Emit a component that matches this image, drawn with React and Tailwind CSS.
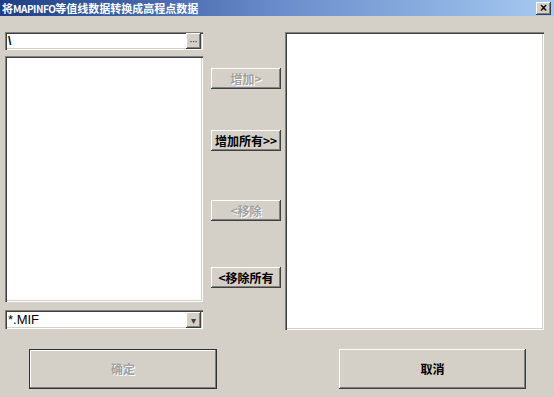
import React from "react";

const cjk = { fontFamily: '"SimSun", "Noto Sans CJK SC", sans-serif' };

// classic win2k bevels
const sunken =
  "shadow-[inset_1px_1px_0_#808080,inset_2px_2px_0_#404040,inset_-1px_-1px_0_#ffffff,inset_-2px_-2px_0_#d4d0c8]";
const raised =
  "shadow-[inset_-1px_-1px_0_#404040,inset_1px_1px_0_#ffffff,inset_-2px_-2px_0_#808080,inset_2px_2px_0_#d4d0c8]";

function SmallButton({ children, disabled }) {
  return (
    <button
      className={`w-[70px] h-[21px] bg-[#d4d0c8] text-[12px] font-bold leading-none flex items-center justify-center ${raised} ${
        disabled ? "text-[#a0a0a0] [text-shadow:1px_1px_0_#ffffff]" : "text-black"
      }`}
      style={cjk}
    >
      {children}
    </button>
  );
}

function BigButton({ children, disabled, isDefault }) {
  return (
    <button
      className={`w-full h-[40px] bg-[#d4d0c8] text-[12px] font-bold flex items-center justify-center ${
        isDefault
          ? "border border-[#303030] shadow-[inset_-1px_-1px_0_#808080,inset_1px_1px_0_#ffffff]"
          : raised
      } ${disabled ? "text-[#a0a0a0] [text-shadow:1px_1px_0_#ffffff]" : "text-black"}`}
      style={cjk}
    >
      {children}
    </button>
  );
}

function SideButton({ children }) {
  return (
    <div
      className={`w-[15px] h-[16px] bg-[#d4d0c8] flex items-center justify-center text-[10px] leading-none text-[#404040] ${raised}`}
    >
      {children}
    </div>
  );
}

export default function App() {
  return (
    <div className="w-[554px] h-[397px] bg-[#d4d0c8] overflow-hidden relative">
      {/* title bar */}
      <div className="h-[16px] bg-gradient-to-r from-[#1f3f85] via-[#6a8ccb] to-[#a6caf0] flex items-center justify-between pl-[2px] pr-[3px]">
        <span className="text-white text-[11px] font-bold leading-none" style={cjk}>
          将<span className="tracking-[-0.5px] text-[10px]">MAPINFO</span>等值线数据转换成高程点数据
        </span>
        <div
          className={`w-[15px] h-[13px] bg-[#d4d0c8] flex items-center justify-center text-[12px] font-bold leading-none text-black ${raised}`}
          style={{ fontFamily: '"Liberation Sans", sans-serif' }}
        >
          ×
        </div>
      </div>

      <div className="pt-[16px] pl-[5px] flex">
        {/* left column */}
        <div className="w-[198px] flex flex-col">
          <div className={`h-[18px] bg-white flex items-center pl-[3px] pr-[2px] ${sunken}`}>
            <span
              className="flex-1 text-[12px] font-bold leading-none text-black"
              style={{ fontFamily: '"Liberation Sans", sans-serif' }}
            >
              \
            </span>
            <SideButton>···</SideButton>
          </div>
          <div className={`mt-[6px] h-[246px] bg-white ${sunken}`} />
          <div className={`mt-[8px] h-[19px] bg-white flex items-center pl-[3px] pr-[2px] ${sunken}`}>
            <span
              className="flex-1 text-[13px] leading-none text-black"
              style={{ fontFamily: '"Liberation Sans", sans-serif' }}
            >
              *.MIF
            </span>
            <SideButton>▾</SideButton>
          </div>
        </div>

        {/* middle buttons */}
        <div className="ml-[8px] w-[70px] flex flex-col pt-[36px]">
          <SmallButton disabled>增加&gt;</SmallButton>
          <div className="mt-[41px]">
            <SmallButton>增加所有&gt;&gt;</SmallButton>
          </div>
          <div className="mt-[49px]">
            <SmallButton disabled>&lt;移除</SmallButton>
          </div>
          <div className="mt-[46px]">
            <SmallButton>&lt;移除所有</SmallButton>
          </div>
        </div>

        {/* right list */}
        <div className={`ml-[4px] w-[259px] h-[298px] bg-white ${sunken}`} />
      </div>

      {/* bottom buttons */}
      <div className="mt-[19px] flex">
        <div className="ml-[29px] w-[188px]">
          <BigButton disabled isDefault>确定</BigButton>
        </div>
        <div className="ml-[122px] w-[187px]">
          <BigButton>取消</BigButton>
        </div>
      </div>
    </div>
  );
}
